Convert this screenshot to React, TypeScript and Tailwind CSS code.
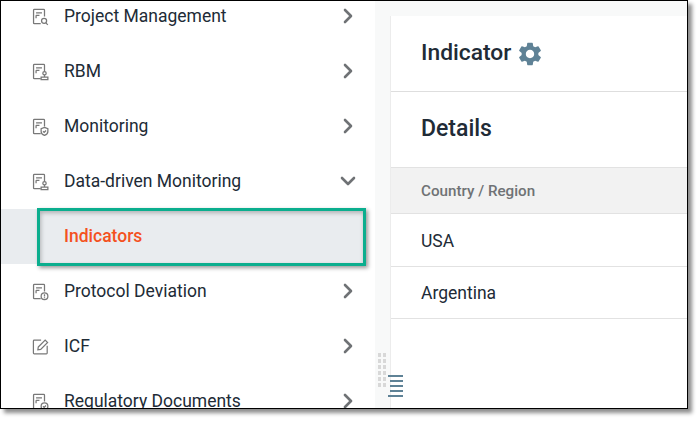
import { ChevronDown, ChevronRight } from "lucide-react";
import { MdSettings } from "react-icons/md";

const base = "M12 18.5H4.5a1 1 0 0 1-1-1V2.5a1 1 0 0 1 1-1h11a1 1 0 0 1 1 1V10M6.5 5.5h7M6.5 8.5h4M6.5 8.5v3.5";

function DocIcon({ kind }: { kind: string }) {
  return (
    <svg viewBox="3 1 17.5 19" className="w-[15px] h-[16px] shrink-0 overflow-visible" fill="none" stroke="#787878" strokeWidth="1.5">
      <path d={base} />
      {kind === "search" && <><circle cx="16" cy="15" r="3" /><path d="M18.2 17.4l2.2 2.4" /></>}
      {kind === "stamp" && <><circle cx="16.5" cy="12" r="2" /><path d="M16.5 14v2M12.5 16.5h8v3h-8z" /></>}
      {kind === "shield" && <><path d="M16.5 11l4 1.5v3.2c0 2.3-1.7 3.8-4 4.8-2.3-1-4-2.5-4-4.8v-3.2z" /><path d="M14.8 15.6l1.3 1.3 2.2-2.2" /></>}
      {kind === "alert" && <><circle cx="16.5" cy="15.5" r="4" /><path d="M16.5 13.2v2.6M16.5 16.8v1" /></>}
      {kind === "check" && <><circle cx="16.5" cy="15.5" r="4" /><path d="M14.7 15.5l1.4 1.4 2.2-2.2" /></>}
    </svg>
  );
}

function EditIcon() {
  return (
    <svg viewBox="2 2 18.5 19" className="w-[15px] h-[16px] shrink-0 overflow-visible" fill="none" stroke="#787878" strokeWidth="1.5">
      <path d="M12 3H3.5a1 1 0 0 0-1 1v15a1 1 0 0 0 1 1h15a1 1 0 0 0 1-1V10" />
      <path d="M8.5 11.5L17 3l3 3-8.5 8.5-3.5.5z" />
    </svg>
  );
}

const items = [
  { label: "Project Management", icon: "search" },
  { label: "RBM", icon: "stamp" },
  { label: "Monitoring", icon: "shield" },
  { label: "Data-driven Monitoring", icon: "stamp", open: true },
  { label: "Indicators", child: true },
  { label: "Protocol Deviation", icon: "alert" },
  { label: "ICF", icon: "edit" },
  { label: "Regulatory Documents", icon: "check" },
];

export default function App() {
  return (
    <div className="w-[699px] h-[421px] bg-white font-['Roboto',sans-serif] overflow-hidden">
      <div className="relative w-[688px] h-[409px] border border-black shadow-[4px_4px_4px_rgba(0,0,0,0.45)] flex overflow-hidden bg-white">
        <div className="w-[374px] shrink-0 -mt-[12px]">
          {items.map((item) =>
            item.child ? (
              <div key={item.label} className="h-[55px] w-[364px] bg-[#e9ecef] flex items-center pl-[63px] text-[17.5px] font-medium text-[#f4511e]">
                {item.label}
              </div>
            ) : (
              <div key={item.label} className="h-[55px] flex items-center pl-[32px] pr-[15px] text-[17.5px] text-[#212b36]">
                {item.icon === "edit" ? <EditIcon /> : <DocIcon kind={item.icon!} />}
                <span className="ml-[16px] flex-1">{item.label}</span>
                {item.open ? (
                  <ChevronDown className="w-[24px] h-[24px] text-[#6f7275] -translate-y-px" strokeWidth={2.6} />
                ) : (
                  <ChevronRight className="w-[24px] h-[24px] text-[#6f7275] -translate-y-px" strokeWidth={2.6} />
                )}
              </div>
            )
          )}
        </div>

        <div className="flex-1 bg-[#f8f9f9] pt-[15px] pl-[15px]">
          <div className="h-full bg-white border-l border-[#ececec]">
            <div className="h-[76px] border-b border-[#dedede] flex items-center pl-[30px] gap-[5px]">
              <span className="text-[22.8px] font-medium text-[#212b36]">Indicator</span>
              <MdSettings className="w-[28px] h-[28px] text-[#5f8296]" />
            </div>
            <div className="h-[76px] border-b border-[#e2e2e2] flex items-center pl-[30px] text-[23px] font-medium text-[#212b36]">
              Details
            </div>
            <div className="h-[46px] bg-[#f2f2f2] border-b border-[#e2e2e2] flex items-center pl-[30px] pt-[2px] text-[15.2px] font-medium text-[#6f7275]">
              Country / Region
            </div>
            <div className="h-[53px] border-b border-[#e2e2e2] flex items-center pl-[30px] pt-[2px] text-[17.5px] text-[#212b36]">USA</div>
            <div className="h-[52px] border-b border-[#e2e2e2] flex items-center pl-[30px] pt-[1px] text-[17.5px] text-[#212b36]">Argentina</div>
          </div>
        </div>

        {/* teal callout round the selected item */}
        <div className="absolute left-[36px] top-[207px] w-[329px] h-[58px] border-[3px] border-[#0bae8e] shadow-[2px_2px_4px_rgba(0,0,0,0.4),inset_1px_2px_4px_rgba(0,0,0,0.25)]" />

        {/* resize handle */}
        <div className="absolute left-[377px] top-[352px] grid grid-cols-2 gap-[2px]">
          {Array.from({ length: 12 }).map((_, i) => (
            <div key={i} className="w-[3px] h-[4px] bg-[#d8d8d8]" />
          ))}
        </div>
        <div className="absolute left-[387px] top-[374px] flex flex-col items-end gap-[3px]">
          <div className="w-[15px] h-[2px] bg-[#5f8296]" />
          <div className="w-[13px] h-[2px] bg-[#5f8296]" />
          <div className="w-[13px] h-[2px] bg-[#5f8296]" />
          <div className="w-[13px] h-[2px] bg-[#5f8296]" />
          <div className="w-[15px] h-[2px] bg-[#5f8296]" />
        </div>
      </div>
    </div>
  );
}
